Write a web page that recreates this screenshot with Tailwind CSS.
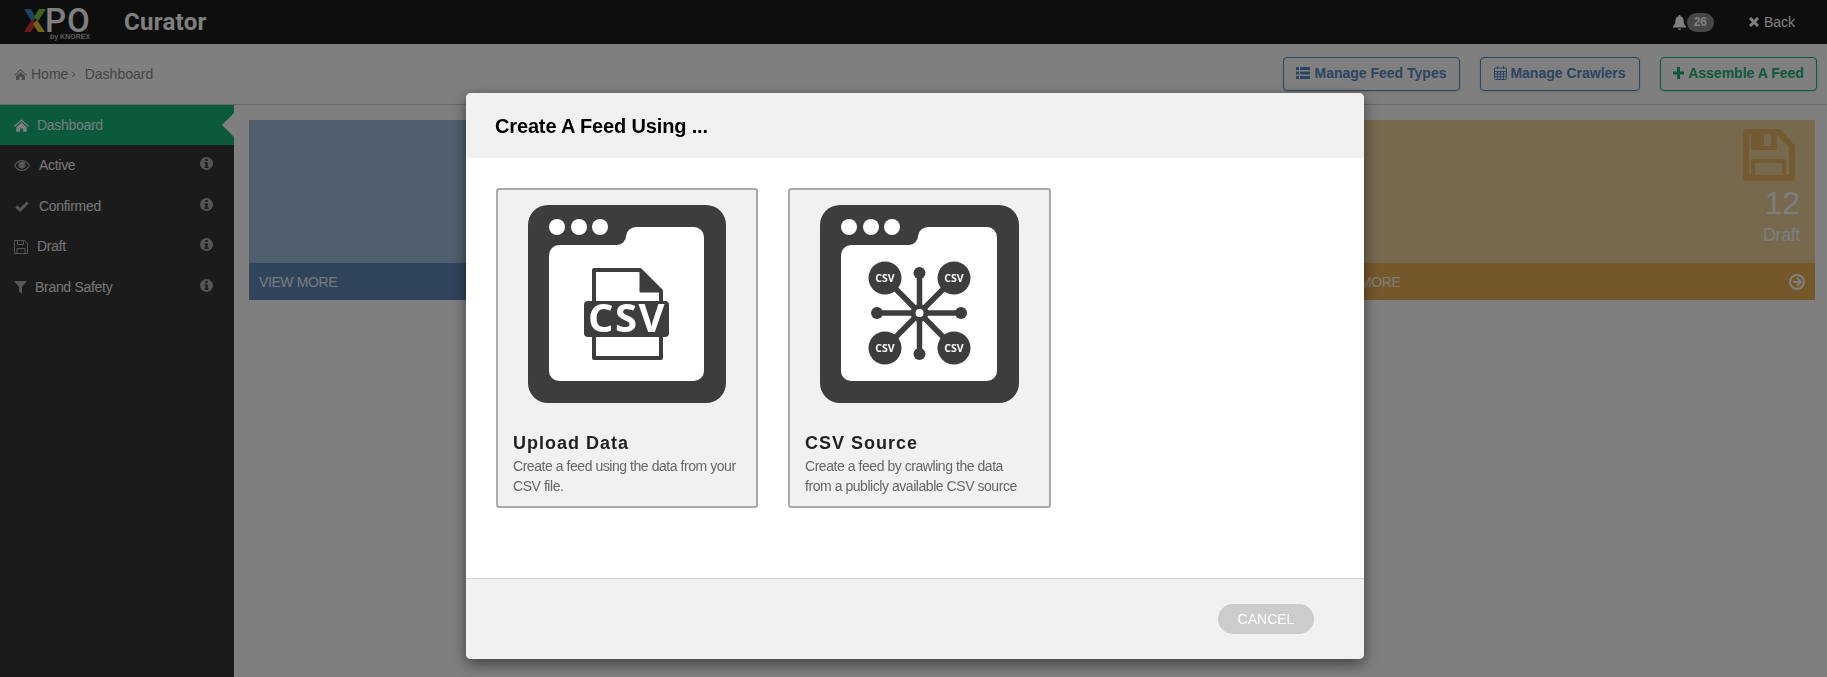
<!DOCTYPE html>
<html lang="en">
<head>
  <meta charset="UTF-8" />
  <title>Curator</title>
  <script src="https://cdn.jsdelivr.net/npm/@tailwindcss/browser@4"></script>
</head>
<body class="h-[677px] overflow-hidden bg-white font-['Liberation_Sans',sans-serif]">

  <!-- top bar -->
  <header class="h-[44px] bg-[#1c1c1c] flex items-center justify-between pl-[24px] pr-[32px]">
    <div class="flex items-center">
      <div class="relative w-[70px] h-[44px]">
        <svg class="absolute left-0 top-[9px]" width="22" height="24" viewBox="0 0 22 24">
          <path d="M0 0h7l5 9-4 4z" fill="#2f86c9" />
          <path d="M22 0h-7l-5 8 4 4z" fill="#7fc23a" />
          <path d="M0 23h7l5-9-4-4z" fill="#d8302f" />
          <path d="M21 23h-7l-5-8 4-4z" fill="#e6c52a" />
        </svg>
        <span class="absolute left-[21px] top-[9px] text-[33px] leading-[24px] font-medium font-['Roboto',sans-serif] tracking-[1px] text-white">PO</span>
        <span class="absolute left-[26px] top-[33px] text-[7px] leading-[8px] font-bold text-[#bbb] whitespace-nowrap">by KNOREX</span>
      </div>
      <span class="ml-[30px] text-[24px] leading-[30px] font-bold font-['Roboto',sans-serif] tracking-[0.3px] text-white">Curator</span>
    </div>
    <div class="flex items-center">
      <svg width="13" height="15" viewBox="0 0 13 15" fill="#fff"><path d="M6.5 0a1 1 0 0 1 1 1.2C9.6 1.7 10.6 3.300 10.600 5.500c0 3 .8 4.500 2.400 6v1H0v-1c1.600-1.500 2.400-3 2.400-6 0-2.200 1-3.800 3.100-4.300A1 1 0 0 1 6.500 0zM5 13.500h3a1.500 1.500 0 0 1-3 0z"/></svg>
      <span class="ml-[1px] w-[27px] h-[19px] rounded-full bg-[#8e8e8e] text-white text-[12px] leading-[19px] font-bold text-center">26</span>
      <svg class="ml-[35px]" width="10" height="10" viewBox="0 0 10 10" fill="none" stroke="#fff" stroke-width="3"><path d="M1 1l8 8M9 1l-8 8"/></svg>
      <span class="ml-[5px] text-[14px] text-white">Back</span>
    </div>
  </header>

  <!-- sub header -->
  <div class="h-[61px] bg-white border-b border-[#d5d5d5] flex items-center justify-between pl-[14px] pr-[10px]">
    <div class="flex items-center text-[14px] text-[#8a8a8a]">
      <svg width="13" height="11" viewBox="0 0 26 22" fill="#999"><path d="M13 0l13 12-1.500 1.600L13 3 1.500 13.600 0 12zM4 14l9-8 9 8v8h-6.500v-6h-5v6H4z"/></svg>
      <span class="ml-[4px]">Home</span>
      <span class="ml-[3px] text-[13px] text-[#aaa]">›</span>
      <span class="ml-[9px]">Dashboard</span>
    </div>
    <div class="flex items-center gap-[20px] text-[14px] font-bold">
      <button class="h-[34px] w-[177px] pb-[2px] border border-[#568ac2] rounded-[4px] text-[#568ac2] shadow-sm flex items-center justify-center gap-[4px]">
        <svg width="14" height="12" viewBox="0 0 14 12" fill="#568ac2"><path d="M0 0h3v3H0zM4 0h10v3H4zM0 4.500h3v3H0zM4 4.500h10v3H4zM0 9h3v3H0zM4 9h10v3H4z"/></svg>
        Manage Feed Types
      </button>
      <button class="h-[34px] w-[160px] pb-[2px] border border-[#568ac2] rounded-[4px] text-[#568ac2] shadow-sm flex items-center justify-center gap-[3px]">
        <svg width="13" height="14" viewBox="0 0 13 14" fill="none" stroke="#568ac2"><rect x=".5" y="2" width="12" height="11.500" rx="1"/><path d="M.5 5.500h12M.5 8h12M.5 10.700h12M3.500 5.500v8M6.500 5.500v8M9.500 5.500v8M3.500 0v3M9.500 0v3"/></svg>
        Manage Crawlers
      </button>
      <button class="h-[34px] w-[157px] pb-[2px] border border-[#16b478] rounded-[4px] text-[#16b478] shadow-sm flex items-center justify-center gap-[4px]">
        <svg width="11" height="12" viewBox="0 0 11 12" fill="#16b478"><path d="M4 0h3v4.500h4v3H7V12H4V7.500H0v-3h4z"/></svg>
        Assemble A Feed
      </button>
    </div>
  </div>

  <div class="flex h-[572px]">
    <!-- sidebar -->
    <nav class="w-[234px] shrink-0 bg-[#363636] text-[14px] tracking-[-0.3px] text-white/90">
      <a class="relative h-[40px] bg-[#16b478] flex items-center pl-[14px]">
        <svg width="15" height="13" viewBox="0 0 26 22" fill="#fff"><path d="M13 0l13 12-1.500 1.600L13 3 1.500 13.600 0 12zM4 14l9-8 9 8v8h-6.500v-6h-5v6H4z"/></svg>
        <span class="ml-[8px]">Dashboard</span>
        <span class="absolute right-0 top-[8px] w-0 h-0 border-y-[12px] border-y-transparent border-r-[12px] border-r-white"></span>
      </a>
      <a class="h-[41px] flex items-center pl-[14px] pr-[21px]">
        <svg width="16" height="11" viewBox="0 0 16 11" fill="#aaa"><path d="M8 0c3.500 0 6.500 2 8 5.500-1.500 3.500-4.500 5.500-8 5.500S1.500 9 0 5.500C1.500 2 4.500 0 8 0zm0 1.200c-3 0-5.200 1.700-6.600 4.300C2.800 8.100 5 9.800 8 9.800s5.200-1.700 6.600-4.300C13.200 2.900 11 1.200 8 1.200z"/><circle cx="8" cy="5" r="3.600"/></svg>
        <span class="ml-[9px]">Active</span>
        <svg class="ml-auto -mt-[5px]" width="13" height="13" viewBox="0 0 13 13"><circle cx="6.500" cy="6.500" r="6.500" fill="#aaa"/><path d="M5.300 2h2.400v2H5.300zM4.600 5.300h3.100v4.200h.8V11H4.600V9.500h.8V6.800h-.8z" fill="#363636"/></svg>
      </a>
      <a class="h-[41px] flex items-center pl-[15px] pr-[21px]">
        <svg width="14" height="11" viewBox="0 0 14 11" fill="none" stroke="#aaa" stroke-width="3"><path d="M1.200 5.500l4 3.500 7.500-7.500"/></svg>
        <span class="ml-[10px]">Confirmed</span>
        <svg class="ml-auto -mt-[5px]" width="13" height="13" viewBox="0 0 13 13"><circle cx="6.500" cy="6.500" r="6.500" fill="#aaa"/><path d="M5.300 2h2.400v2H5.300zM4.600 5.300h3.100v4.200h.8V11H4.600V9.500h.8V6.800h-.8z" fill="#363636"/></svg>
      </a>
      <a class="h-[40px] pb-[1px] flex items-center pl-[14px] pr-[21px]">
        <svg width="14" height="14" viewBox="0 0 14 14" fill="none" stroke="#aaa"><path d="M.5.500h10l3 3v10H.5z"/><path d="M3.500.5v4h6v-4M3 13.500V8.500h8v5" /></svg>
        <span class="ml-[9px]">Draft</span>
        <svg class="ml-auto -mt-[5px]" width="13" height="13" viewBox="0 0 13 13"><circle cx="6.500" cy="6.500" r="6.500" fill="#aaa"/><path d="M5.300 2h2.400v2H5.300zM4.600 5.300h3.100v4.200h.8V11H4.600V9.500h.8V6.800h-.8z" fill="#363636"/></svg>
      </a>
      <a class="h-[41px] flex items-center pl-[14px] pr-[21px]">
        <svg width="13" height="13" viewBox="0 0 13 13" fill="#aaa"><path d="M0 0h13L8 6v7L5 10.500V6z"/></svg>
        <span class="ml-[8px]">Brand Safety</span>
        <svg class="ml-auto -mt-[5px]" width="13" height="13" viewBox="0 0 13 13"><circle cx="6.500" cy="6.500" r="6.500" fill="#aaa"/><path d="M5.300 2h2.400v2H5.300zM4.600 5.300h3.100v4.200h.8V11H4.600V9.500h.8V6.800h-.8z" fill="#363636"/></svg>
      </a>
    </nav>

    <!-- panels -->
    <main class="flex-1 pl-[15px] pr-[12px] pt-[15px]">
      <div class="grid grid-cols-3 gap-[29px]">
        <div class="h-[180px] bg-[#a0bedc] flex flex-col text-white/90">
          <div class="flex-1"></div>
          <div class="h-[37px] pt-[1px] bg-[#6088b8] flex items-center px-[10px] text-[14px] tracking-[-0.4px]">VIEW MORE</div>
        </div>
        <div class="h-[180px] bg-[#8fd6b8] flex flex-col text-white/90">
          <div class="flex-1"></div>
          <div class="h-[37px] pt-[1px] bg-[#16b478] flex items-center px-[10px] text-[14px] tracking-[-0.4px]">VIEW MORE</div>
        </div>
        <div class="h-[180px] bg-[#ecd29c] flex flex-col text-white/90">
          <div class="flex-1 flex flex-col items-end pt-[9px] pr-[15px]">
            <svg class="mr-[5px]" width="52" height="52" viewBox="0 0 52 52" fill="none" stroke="#e8b562" stroke-width="6" stroke-linejoin="round">
              <path d="M3 3h33l13 15v31H3z"/>
              <path d="M8 3h26v18H8z" fill="#e8b562" stroke="none"/>
              <rect x="21" y="5" width="7" height="12" fill="#ecd29c" stroke="none"/>
              <path d="M10 47V32h31v15" stroke-width="4"/>
            </svg>
            <span class="mt-[2px] text-[32px] leading-[40px]">12</span>
            <span class="text-[18px] leading-[24px] tracking-[-0.4px]">Draft</span>
          </div>
          <div class="h-[37px] pt-[1px] bg-[#ebb054] flex items-center justify-between px-[10px] text-[14px] tracking-[-0.4px]">
            VIEW MORE
            <svg width="16" height="16" viewBox="0 0 16 16" fill="none" stroke="#fff" stroke-width="2"><circle cx="8" cy="8" r="7"/><path d="M8 4l4 4-4 4M4 8h7"/></svg>
          </div>
        </div>
      </div>
    </main>
  </div>

  <!-- modal -->
  <div class="fixed inset-0 bg-black/50">
    <div class="ml-[466px] mt-[93px] w-[898px] rounded-[5px] bg-white overflow-hidden shadow-[0_5px_15px_rgba(0,0,0,0.5)]">
      <div class="h-[65px] bg-[#f1f1f1] flex items-center pl-[29px] text-[20px] font-bold tracking-[-0.15px] text-black">Create A Feed Using ...</div>
      <div class="h-[420px] p-[30px] flex gap-[30px]">
        <div class="w-[262px] h-[320px] bg-[#f1f1f1] border-2 border-[#aaa] rounded-[3px] pt-[15px] px-[15px]">
          <svg class="mx-[15px]" width="198" height="198" viewBox="0 0 198 198">
            <rect width="198" height="198" rx="20" fill="#3d3d3d" />
            <circle cx="29" cy="22" r="8" fill="#fff" /><circle cx="51" cy="22" r="8" fill="#fff" /><circle cx="72" cy="22" r="8" fill="#fff" />
            <path d="M21 50a10 10 0 0 1 10-10h58a9 9 0 0 0 9-9a10 10 0 0 1 10-9h58a10 10 0 0 1 10 10v134a10 10 0 0 1-10 10H31a10 10 0 0 1-10-10z" fill="#fff" />
            <path d="M66 97V65h46l21 21v11M66 132v21h67v-21" fill="none" stroke="#3d3d3d" stroke-width="4" stroke-linejoin="round" />
            <path d="M112 65v22h21z" fill="#3d3d3d" stroke="#3d3d3d" stroke-linejoin="round" />
            <rect x="56" y="96" width="85" height="36" rx="4" fill="#3d3d3d" />
            <text x="99" y="127" text-anchor="middle" font-family="Open Sans" font-weight="700" font-size="40" letter-spacing="1.500" fill="#fff">CSV</text>
          </svg>
          <h3 class="mt-[28px] text-[18px] leading-[24px] font-bold tracking-[1px] text-[#222]">Upload Data</h3>
          <p class="mt-[1px] text-[14px] leading-[20px] text-[#666] tracking-[-0.45px]">Create a feed using the data from your CSV file.</p>
        </div>
        <div class="w-[263px] h-[320px] bg-[#f1f1f1] border-2 border-[#aaa] rounded-[3px] pt-[15px] px-[15px]">
          <svg class="mx-[15px]" width="199" height="198" viewBox="0 0 199 198">
            <rect width="199" height="198" rx="20" fill="#3d3d3d" />
            <circle cx="29" cy="22" r="8" fill="#fff" /><circle cx="51" cy="22" r="8" fill="#fff" /><circle cx="72" cy="22" r="8" fill="#fff" />
            <path d="M21 50a10 10 0 0 1 10-10h58a9 9 0 0 0 9-9a10 10 0 0 1 10-9h59a10 10 0 0 1 10 10v134a10 10 0 0 1-10 10H31a10 10 0 0 1-10-10z" fill="#fff" />
            <g stroke="#3d3d3d" stroke-width="5.500">
              <path d="M99.500 68v81M57 108h84M65 73l69 70M134 73l-69 70" />
            </g>
            <circle cx="99.500" cy="68" r="6" fill="#3d3d3d" /><circle cx="99.500" cy="149" r="6" fill="#3d3d3d" />
            <circle cx="57" cy="108" r="6" fill="#3d3d3d" /><circle cx="141" cy="108" r="6" fill="#3d3d3d" />
            <circle cx="65" cy="73" r="16.500" fill="#3d3d3d" /><circle cx="134" cy="73" r="16.500" fill="#3d3d3d" />
            <circle cx="65" cy="143" r="16.500" fill="#3d3d3d" /><circle cx="134" cy="143" r="16.500" fill="#3d3d3d" />
            <circle cx="99.500" cy="108" r="9" fill="#3d3d3d" /><circle cx="99.500" cy="108" r="4" fill="#fff" />
            <g font-family="Open Sans" font-weight="700" font-size="10.500" fill="#fff" text-anchor="middle">
              <text x="65" y="77">CSV</text><text x="134" y="77">CSV</text>
              <text x="65" y="147">CSV</text><text x="134" y="147">CSV</text>
            </g>
          </svg>
          <h3 class="mt-[28px] text-[18px] leading-[24px] font-bold tracking-[1px] text-[#222]">CSV Source</h3>
          <p class="mt-[1px] text-[14px] leading-[20px] text-[#666] tracking-[-0.45px]">Create a feed by crawling the data<br>from a publicly available CSV source</p>
        </div>
      </div>
      <div class="h-[81px] bg-[#f1f1f1] border-t border-[#d5d5d5] flex items-start justify-end pt-[25px] pr-[50px]">
        <button class="w-[96px] h-[30px] rounded-full bg-[#ccc] text-white text-[14px]">CANCEL</button>
      </div>
    </div>
  </div>

</body>
</html>
